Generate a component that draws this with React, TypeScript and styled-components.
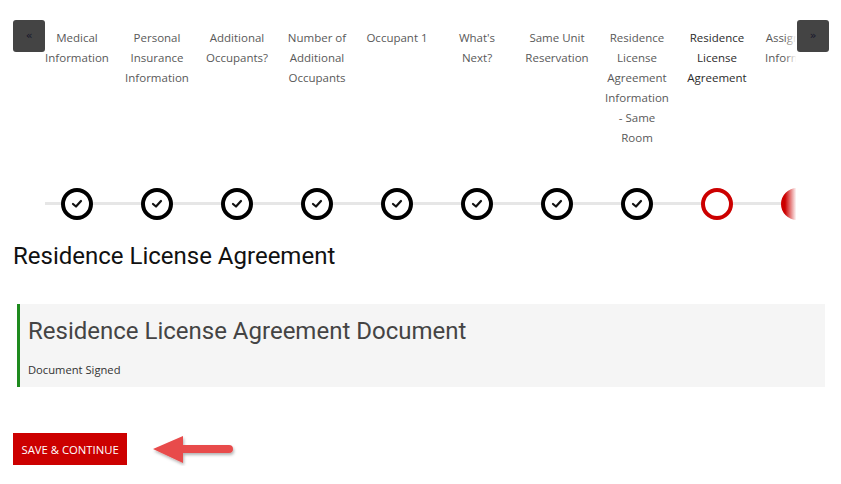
import React from "react";
import styled, { createGlobalStyle } from "styled-components";

const Global = createGlobalStyle`
  html, body { margin: 0; padding: 0; background: #fff; }
  body { font-family: "Open Sans", "Liberation Sans", sans-serif; }
`;

const Page = styled.div`
  padding: 20px 12px 0 13px;
  width: 841px;
  box-sizing: border-box;
`;

const Carousel = styled.div`
  display: flex;
  align-items: flex-start;
`;

const NavButton = styled.button`
  flex: none;
  width: 32px;
  height: 32px;
  border: none;
  border-radius: 3px;
  background: #444;
  color: #15152a;
  font-family: "DejaVu Sans", sans-serif;
  font-size: 11px;
  line-height: 32px;
  padding: 0;
  display: flex;
  align-items: center;
  justify-content: center;
`;

const Viewport = styled.div`
  position: relative;
  flex: 1;
  overflow: hidden;
  height: 200px;
`;

const Fade = styled.div`
  position: absolute;
  z-index: 2;
  top: 0;
  right: 0;
  width: 12px;
  height: 100%;
  background: linear-gradient(to right, rgba(255, 255, 255, 0), #fff 95%);
`;

const Track = styled.div`
  display: flex;
  margin-left: -8px;
`;

const Step = styled.div`
  flex: none;
  width: 80px;
  display: flex;
  flex-direction: column;
  align-items: center;
  padding-top: 8px;
  position: relative;
  &::before {
    content: "";
    position: absolute;
    left: 0;
    right: 0;
    top: 182px;
    height: 3px;
    background: #e6e6e6;
  }
`;

const Label = styled.div<{ $active?: boolean }>`
  height: 160px;
  width: 66px;
  text-align: center;
  font-size: 11.5px;
  line-height: 20px;
  color: ${(p) => (p.$active ? "#2b2b2b" : "#595959")};
`;

const Marker = styled.div<{ $state: "done" | "current" | "next" }>`
  position: relative;
  z-index: 1;
  width: 32px;
  height: 32px;
  box-sizing: border-box;
  border-radius: 50%;
  display: flex;
  align-items: center;
  justify-content: center;
  border: 4px solid ${(p) => (p.$state === "done" ? "#000" : "#cc0000")};
  background: ${(p) => (p.$state === "next" ? "#cc0000" : "#fff")};
`;

const Heading = styled.h1`
  margin: 22px 0 0;
  font-family: Roboto, "Liberation Sans", sans-serif;
  font-weight: 400;
  font-size: 24px;
  line-height: 28px;
  color: #111;
`;

const Card = styled.div`
  margin: 34px 4px 0 4px;
  background: #f5f5f5;
  border-left: 3px solid #1e8a1e;
  padding: 13px 8px 9px 8px;
`;

const CardTitle = styled.h2`
  margin: 0;
  font-family: Roboto, "Liberation Sans", sans-serif;
  font-weight: 400;
  font-size: 24px;
  line-height: 28px;
  color: #444;
`;

const CardText = styled.p`
  margin: 17px 0 0;
  font-size: 11.2px;
  line-height: 16px;
  color: #333;
`;

const Actions = styled.div`
  margin-top: 45px;
  display: flex;
  align-items: center;
  gap: 25px;
`;

const SaveButton = styled.button`
  height: 32px;
  padding: 0 8.5px;
  border: none;
  background: #cc0000;
  color: #fff;
  font-family: "Open Sans", "Liberation Sans", sans-serif;
  font-size: 11.3px;
  text-transform: uppercase;
`;

const ArrowSvg = styled.svg`
  display: block;
  overflow: visible;
`;

const Check = () => (
  <svg width="12" height="10" viewBox="0 0 12 10">
    <polyline points="2,5 5,7.5 10,2" fill="none" stroke="#111" strokeWidth="2.2" strokeLinecap="round" strokeLinejoin="round" />
  </svg>
);

const steps = [
  "Medical Information",
  "Personal Insurance Information",
  "Additional Occupants?",
  "Number of Additional Occupants",
  "Occupant 1",
  "What's Next?",
  "Same Unit Reservation",
  "Residence License Agreement Information - Same Room",
  "Residence License Agreement",
  "Assignment Information",
];

export default function App() {
  return (
    <Page>
      <Global />
      <Carousel>
        <NavButton aria-label="previous">«</NavButton>
        <Viewport>
          <Track>
            {steps.map((s, i) => {
              const state = i < 8 ? "done" : i === 8 ? "current" : "next";
              return (
                <Step key={s}>
                  <Label $active={i === 8}>{s}</Label>
                  <Marker $state={state}>{state === "done" && <Check />}</Marker>
                </Step>
              );
            })}
          </Track>
          <Fade />
        </Viewport>
        <NavButton aria-label="next">»</NavButton>
      </Carousel>
      <Heading>Residence License Agreement</Heading>
      <Card>
        <CardTitle>Residence License Agreement Document</CardTitle>
        <CardText>Document Signed</CardText>
      </Card>
      <Actions>
        <SaveButton>Save &amp; Continue</SaveButton>
        <ArrowSvg width="84" height="34" viewBox="0 0 84 34">
          <defs>
            <filter id="sh" x="-20%" y="-30%" width="140%" height="170%">
              <feDropShadow dx="1" dy="2" stdDeviation="1.5" floodColor="#000" floodOpacity="0.3" />
            </filter>
          </defs>
          <g filter="url(#sh)">
            <path d="M1 17 L31 4 L31 13 L77 13 A4 4 0 0 1 77 21 L31 21 L31 31 Z" fill="#e84b4b" />
          </g>
        </ArrowSvg>
      </Actions>
    </Page>
  );
}
